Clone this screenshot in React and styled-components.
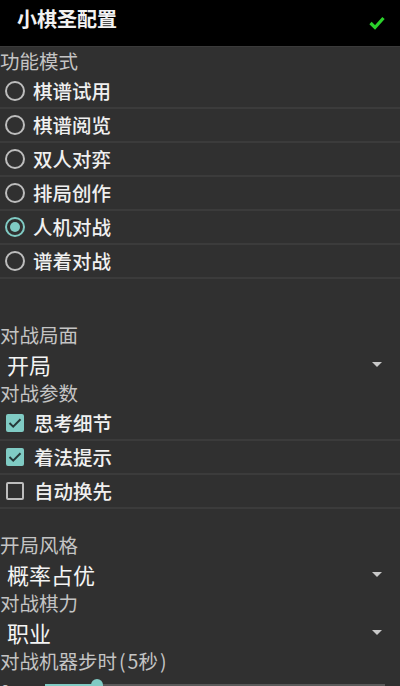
import React from 'react';
import styled, { createGlobalStyle } from 'styled-components';

const GlobalStyle = createGlobalStyle`
  html, body {
    margin: 0;
    padding: 0;
    background: #303030;
    overflow: hidden;
  }
  body {
    font-family: 'Noto Sans CJK SC', 'Noto Sans', sans-serif;
  }
`;

const TEAL = '#80cbc4';

const modes = ['棋谱试用', '棋谱阅览', '双人对弈', '排局创作', '人机对战', '谱着对战'];
const params = [
  { label: '思考细节', checked: true },
  { label: '着法提示', checked: true },
  { label: '自动换先', checked: false },
];

const CheckMark = () => (
  <svg width="16" height="14" viewBox="0 0 16 14">
    <path d="M1.5 7 L6 11.5 L14.5 2" fill="none" stroke="#2bd12b" strokeWidth="3.2" />
  </svg>
);

const App = () => (
  <Screen>
    <GlobalStyle />
    <Header>
      <Title>小棋圣配置</Title>
      <CheckMark />
    </Header>

    <SectionLabel>功能模式</SectionLabel>
    {modes.map((m) => (
      <OptionRow key={m}>
        <Radio selected={m === '人机对战'} />
        <OptionText>{m}</OptionText>
      </OptionRow>
    ))}

    <Spacer h={42} />
    <SectionLabel>对战局面</SectionLabel>
    <Dropdown>
      <DropdownValue>开局</DropdownValue>
      <Caret />
    </Dropdown>
    <SectionLabel>对战参数</SectionLabel>
    {params.map((p) => (
      <OptionRow key={p.label}>
        <Checkbox checked={p.checked}>
          {p.checked && (
            <svg width="14" height="12" viewBox="0 0 14 12">
              <path d="M1.5 6 L5.2 9.6 L12.5 2.2" fill="none" stroke="#263838" strokeWidth="2" />
            </svg>
          )}
        </Checkbox>
        <OptionText>{p.label}</OptionText>
      </OptionRow>
    ))}

    <Spacer h={22} />
    <SectionLabel>开局风格</SectionLabel>
    <Dropdown>
      <DropdownValue>概率占优</DropdownValue>
      <Caret />
    </Dropdown>
    <SectionLabel>对战棋力</SectionLabel>
    <Dropdown>
      <DropdownValue>职业</DropdownValue>
      <Caret />
    </Dropdown>
    <SectionLabel>对战机器步时<Paren>(</Paren>5秒<Paren>)</Paren></SectionLabel>
    <SliderRow>
      <SliderMin>0</SliderMin>
      <Track>
        <TrackFill style={{ width: '52px' }} />
        <Thumb />
      </Track>
    </SliderRow>
  </Screen>
);

const Screen = styled('div')`
  width: 400px;
  height: 686px;
  background: #303030;
  display: flex;
  flex-direction: column;
`;

const Header = styled('div')`
  height: 46px;
  flex-shrink: 0;
  background: #000;
  border-bottom: 1px solid #3a3a3a;
  display: flex;
  align-items: center;
  justify-content: space-between;
  padding: 0 15px 0 17px;
`;

const Title = styled('span')`
  color: #f2f2f2;
  font-size: 20px;
  font-weight: 700;
  line-height: 1;
  margin-top: -8px;
`;

const SectionLabel = styled('div')`
  height: 28px;
  flex-shrink: 0;
  display: flex;
  align-items: center;
  color: #c4c4c4;
  font-size: 19.5px;
  line-height: 1;
`;

const Paren = styled('span')`
  padding: 0 2px;
`;

const OptionRow = styled('div')`
  height: 32px;
  flex-shrink: 0;
  display: flex;
  align-items: center;
  gap: 8px;
  padding-left: 5px;
  border-bottom: 2px solid #3b3b3b;
`;

const OptionText = styled('span')`
  color: #f0f0f0;
  font-size: 19.5px;
  font-weight: 500;
  line-height: 1;
`;

const Radio = styled('span')`
  width: 20px;
  height: 20px;
  box-sizing: border-box;
  border-radius: 50%;
  border: 2px solid ${(p) => (p.selected ? TEAL : '#bdbdbd')};
  display: flex;
  align-items: center;
  justify-content: center;
  &::after {
    content: '';
    width: 10px;
    height: 10px;
    border-radius: 50%;
    background: ${(p) => (p.selected ? TEAL : 'transparent')};
  }
`;

const Checkbox = styled('span')`
  width: 18px;
  height: 18px;
  margin: 0 2px 0 1px;
  box-sizing: border-box;
  border-radius: 2px;
  border: 2px solid ${(p) => (p.checked ? TEAL : '#bdbdbd')};
  background: ${(p) => (p.checked ? TEAL : 'transparent')};
  display: flex;
  align-items: center;
  justify-content: center;
`;

const Spacer = styled('div')`
  height: ${(p) => p.h}px;
  flex-shrink: 0;
`;

const Dropdown = styled('div')`
  height: 30px;
  flex-shrink: 0;
  display: flex;
  align-items: center;
  justify-content: space-between;
  padding: 0 18px 0 7px;
`;

const DropdownValue = styled('span')`
  color: #f4f4f4;
  font-size: 22px;
  font-weight: 400;
  line-height: 1;
`;

const Caret = styled('span')`
  width: 0;
  height: 0;
  border-left: 5px solid transparent;
  border-right: 5px solid transparent;
  border-top: 5px solid #c8c8c8;
`;

const SliderRow = styled('div')`
  height: 20px;
  flex-shrink: 0;
  display: flex;
  align-items: center;
  padding-right: 15px;
`;

const SliderMin = styled('span')`
  width: 45px;
  color: #c4c4c4;
  font-size: 19px;
  line-height: 1;
  margin-top: 10px;
`;

const Track = styled('div')`
  position: relative;
  flex: 1;
  height: 2px;
  background: #5a5a5a;
`;

const TrackFill = styled('div')`
  height: 100%;
  background: ${TEAL};
`;

const Thumb = styled('span')`
  position: absolute;
  left: 46px;
  top: -5px;
  width: 12px;
  height: 12px;
  border-radius: 50%;
  background: ${TEAL};
`;

export default App;
